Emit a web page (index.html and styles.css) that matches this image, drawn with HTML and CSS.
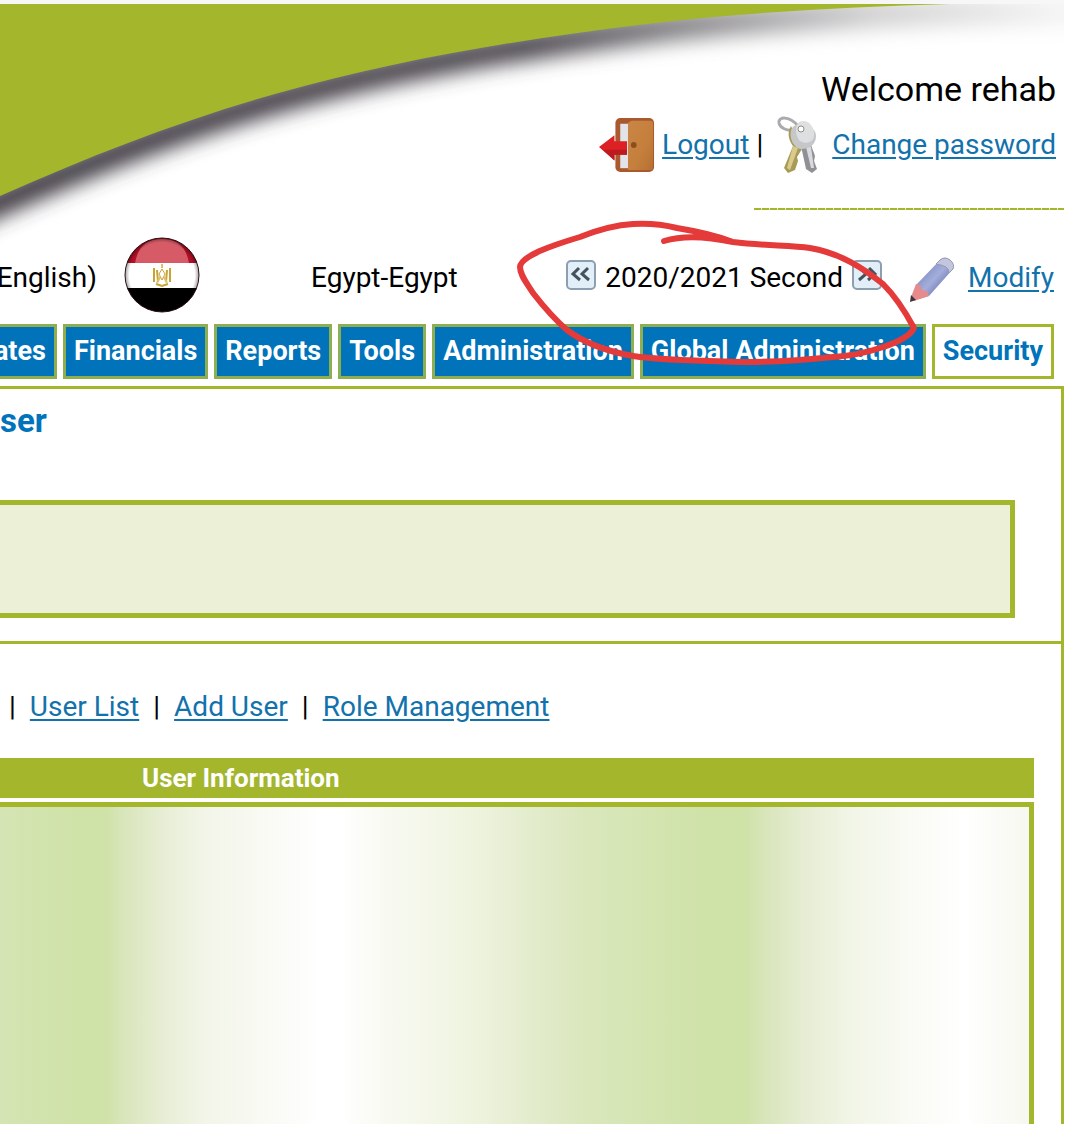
FILE: index.html
```html
<!doctype html>
<html lang="en">
    <head>
        <meta charset="utf-8">
        <title>Security</title>
        <meta name="viewport" content="width=device-width, initial-scale=1"/>
        <link rel="stylesheet" href="styles.css">
    </head>
    <body>
        <div class="page">
            <svg class="swoosh" viewBox="0 0 1064 250" preserveAspectRatio="none" aria-hidden="true">
                <defs>
                    <linearGradient id="fade" gradientUnits="userSpaceOnUse" x1="0" y1="0" x2="1064" y2="0">
                        <stop offset="0" stop-color="#3f3a42"/>
                        <stop offset=".5" stop-color="#4c484f"/>
                        <stop offset=".64" stop-color="#858387"/>
                        <stop offset=".82" stop-color="#d0d0d1"/>
                        <stop offset="1" stop-color="#f4f4f4"/>
                    </linearGradient>
                    <filter id="soft" filterUnits="userSpaceOnUse" x="-80" y="-40" width="1250" height="330">
                        <feGaussianBlur stdDeviation="10"/>
                    </filter>
                </defs>
                <path d="M1140 12H950C849 14 748 18 647 30C523 45 399 65 275 100C183 126 92 161 0 202L-60 230" fill="none" stroke="url(#fade)" stroke-width="28" filter="url(#soft)"/>
                <path d="M0 4H950C849 7 748 12 647 24C523 39 399 59 275 94C183 120 92 155 0 196Z" fill="#a3b62c"/>
                <path d="M0 0H1064V4H0Z" fill="#f7f7f7"/>
            </svg>

            <div class="account">
                <div class="welcome">Welcome rehab</div>
                <div class="account-links">
                    <svg class="icon-door" viewBox="0 0 58 58" aria-hidden="true">
                        <defs>
                            <linearGradient id="wood" x1="0" y1="0" x2="1" y2="1">
                                <stop offset="0" stop-color="#c98646"/>
                                <stop offset=".6" stop-color="#c57f3c"/>
                                <stop offset="1" stop-color="#b56f32"/>
                            </linearGradient>
                        </defs>
                        <rect x="17" y="1" width="40" height="56" rx="5" fill="#a9592d"/>
                        <path d="M22 7h9v46h-9z" fill="#e3e4ea"/>
                        <path d="M30 6l4-2h19q3 0 3 3v45q0 3-3 3H30z" fill="url(#wood)"/>
                        <circle cx="36" cy="29" r="3" fill="#8f4d1d"/>
                        <path d="M0 31L16 19v6h13v14H16v6z" fill="#dc2024"/>
                        <path d="M16 34h13v5H16v6L4 34z" fill="#bd1a20"/>
                    </svg>
                    <a href="#">Logout</a>
                    <span>|</span>
                    <svg class="icon-keys" viewBox="0 0 46 58" aria-hidden="true">
                        <path d="M23 10C15 0 3 0 4 7c1 5 8 8 14 7" fill="none" stroke="#a9abae" stroke-width="3"/>
                        <path d="M16 10C11 18 15 26 18 30L9 52l4 5 7-3 3-9-1-4 5-8z" fill="#a99a57"/>
                        <path d="M18 30l-6 22 3 2 8-22z" fill="#d8cb8b"/>
                        <path d="M26 30l5 23 6 4 5-4-3-8 1-5-4-11z" fill="#8f9195"/>
                        <path d="M31 31l5 21 3 0-3-21z" fill="#d9dadd"/>
                        <path d="M17 12c6-9 24-3 24 8 0 9-7 13-15 13-8-1-13-13-9-21z" fill="#c6c7c9"/>
                        <path d="M24 6c9-4 16 5 15 14-1 7-10 9-15 4-4-6-4-13 0-18z" fill="#dedfe0"/>
                        <circle cx="26" cy="13" r="3" fill="#fff" stroke="#8d8c85" stroke-width="1"/>
                    </svg>
                    <a href="#">Change password</a>
                </div>
                <div class="account-rule"></div>
            </div>

            <div class="settings">
                <div class="settings-left">
                    <span class="language">English)</span>
                    <svg class="icon-flag" viewBox="0 0 76 76" aria-hidden="true">
                        <defs>
                            <clipPath id="disc"><circle cx="38" cy="38" r="37"/></clipPath>
                            <radialGradient id="shade">
                                <stop offset=".86" stop-color="#000" stop-opacity="0"/>
                                <stop offset="1" stop-color="#000" stop-opacity=".45"/>
                            </radialGradient>
                        </defs>
                        <g clip-path="url(#disc)">
                            <path d="M0 0h76v26H0z" fill="#b30f25"/>
                            <path d="M11 26C14 10 22 2 38 2s24 8 27 24z" fill="#d75b66"/>
                            <path d="M0 26h76v25H0z" fill="#fff"/>
                            <circle cx="38" cy="38" r="38" fill="url(#shade)"/>
                            <path d="M0 51h76v25H0z" fill="#000"/>
                        </g>
                        <circle cx="38" cy="38" r="37" fill="none" stroke="#2b1014" stroke-width="1"/>
                        <g fill="none" stroke="#c9a233" stroke-width="2">
                            <path d="M30 31v14M33 33l1 12M46 31v14M43 33l-1 12M32 47l6 2 6-2"/>
                            <path d="M38 27v4M36 40l-3 6M40 40l3 6" stroke="#dcc170"/>
                            <path d="M38 32l-3 5 3 6 3-6z" stroke-width="1"/>
                        </g>
                    </svg>
                    <span>Egypt-Egypt</span>
                </div>
                <div class="settings-right">
                    <button class="step" type="button" aria-label="Previous term">
                        <svg viewBox="0 0 32 32" aria-hidden="true">
                            <rect x="2" y="2" width="28" height="28" rx="4" fill="#e2eff8" stroke="#8c9fb0" stroke-width="2"/>
                            <path d="M14 9l-6 6 7 6M23 9l-6 6 7 6" fill="none" stroke="#45525e" stroke-width="3"/>
                        </svg>
                    </button>
                    <span>2020/2021 Second</span>
                    <button class="step" type="button" aria-label="Next term">
                        <svg viewBox="0 0 32 32" aria-hidden="true">
                            <rect x="2" y="2" width="28" height="28" rx="4" fill="#e2eff8" stroke="#8c9fb0" stroke-width="2"/>
                            <path d="M9 9l6 6-7 6M18 9l6 6-7 6" fill="none" stroke="#45525e" stroke-width="3"/>
                        </svg>
                    </button>
                    <svg class="icon-pencil" viewBox="0 0 46 48" aria-hidden="true">
                        <defs>
                            <linearGradient id="lead" x1="0" y1="0" x2="1" y2="1">
                                <stop offset=".2" stop-color="#7f8bc2"/>
                                <stop offset=".5" stop-color="#a3aedb"/>
                                <stop offset=".8" stop-color="#626eab"/>
                            </linearGradient>
                        </defs>
                        <path d="M7 30L32 4q4-3 9 1 5 4 3 9L20 41l-10 3z" fill="url(#lead)"/>
                        <path d="M31 5q5-4 10 0 5 4 3 9l-4 4q1-7-13-9z" fill="#c3c6dc" stroke="#979bb2" stroke-width="1"/>
                        <path d="M7 29l4 1 2 5 5 1 2 5-15 5-3-4z" fill="#e58b8d"/>
                        <path d="M2 40l5 5-6 2z" fill="#38363c"/>
                    </svg>
                    <a href="#">Modify</a>
                </div>
            </div>

            <nav class="tabs">
                <a href="#">ates</a>
                <a href="#">Financials</a>
                <a href="#">Reports</a>
                <a href="#">Tools</a>
                <a href="#">Administration</a>
                <a href="#">Global Administration</a>
                <a class="active" href="#">Security</a>
            </nav>

            <main class="content">
                <div class="content-head">
                    <h1>ser</h1>
                    <div class="notice"></div>
                </div>
                <div class="sub-links">
                    <span>|</span>
                    <a href="#">User List</a>
                    <span>|</span>
                    <a href="#">Add User</a>
                    <span>|</span>
                    <a href="#">Role Management</a>
                </div>
                <h2>User Information</h2>
                <div class="user-info"></div>
            </main>

            <!-- hand-drawn mark round the term picker -->
            <svg class="marker" viewBox="0 0 410 150" aria-hidden="true">
                <path d="M149 23C165 18 185 17 218 24C250 28 275 27 295 30C325 35 348 50 368 66C380 78 391 95 399 110C393 124 350 137 318 139C290 142 260 144 232 144C200 143 150 143 118 138C90 133 68 124 52 112C38 100 25 84 18 75C11 64 5 57 5 49C6 38 35 28 65 19C85 11 100 7 118 6C135 5 150 7 162 10C180 13 200 17 218 24"/>
            </svg>
        </div>
    </body>
</html>
```
FILE: styles.css
```css
* {
    box-sizing: border-box;
}
body {
    margin: 0;
    background-color: #fff;
    color: #000;
    font-family: Roboto, "Liberation Sans", sans-serif;
    font-size: 28px;
    line-height: 32px;
}
a {
    color: #1272ac;
    text-underline-offset: 3px;
    white-space: nowrap;
}
.page {
    position: relative;
    display: flex;
    flex-direction: column;
    min-height: 100vh;
    padding-right: 16px;
    overflow: hidden;
}
.page svg {
    display: block;
    flex: none;
}

/* header */
.swoosh {
    position: absolute;
    top: 0;
    left: 0;
    z-index: -1;
    width: calc(100% - 16px);
    height: 250px;
}
.account {
    display: flex;
    flex-direction: column;
    align-items: flex-end;
    padding-top: 69px;
}
.welcome {
    padding-right: 8px;
    font-size: 34px;
    line-height: 40px;
}
.account-links {
    display: flex;
    align-items: center;
    gap: 7px;
    height: 72px;
    padding-right: 8px;
}
.icon-door {
    width: 56px;
    height: 58px;
}
.icon-keys {
    width: 46px;
    height: 58px;
    margin: 0 4px 0 5px;
}
.account-rule {
    width: 310px;
    height: 2px;
    margin-top: 27px;
    background: repeating-linear-gradient(to right, #a3b62c 0, #a3b62c 7px, #e3e9c0 7px, #e3e9c0 8px);
}
.settings {
    display: flex;
    justify-content: space-between;
    align-items: center;
    height: 114px;
    padding: 16px 10px 0 0;
}
.settings-left,
.settings-right {
    display: flex;
    align-items: center;
}
.settings span,
.settings a {
    padding-top: 6px;
    white-space: nowrap;
}
.settings .language {
    display: flex;
    justify-content: flex-end;
    width: 97px;
}
.icon-flag {
    width: 76px;
    height: 76px;
    margin: 0 111px 0 27px;
}
.settings-right {
    gap: 8px;
}
.step {
    width: 32px;
    height: 32px;
    padding: 0;
    border: 0;
    background: none;
}
.icon-pencil {
    width: 46px;
    height: 48px;
    margin: 8px 5px 0 18px;
}

/* tabs */
.tabs {
    display: flex;
    justify-content: flex-end;
    gap: 6px;
    padding-right: 10px;
}
.tabs a {
    padding: 8px;
    border: 3px solid #8fae50;
    background-color: #0073ba;
    color: #fff;
    font-size: 27px;
    font-weight: bold;
    line-height: 33px;
    text-decoration: none;
}
.tabs .active {
    border-color: #a3b62c;
    background-color: #fff;
    color: #0073ba;
}

/* content */
.content {
    display: flex;
    flex: 1;
    flex-direction: column;
    margin-top: 7px;
    border-top: 3px solid #a3b62c;
    border-right: 3px solid #a3b62c;
}
.content-head {
    padding: 12px 46px 23px 0;
    border-bottom: 3px solid #a3b62c;
}
.content h1 {
    margin: 0 0 59px;
    color: #0073ba;
    font-size: 33px;
    line-height: 40px;
}
.notice {
    height: 118px;
    border: 5px solid #a3b62c;
    border-left: 0;
    background-color: #ebf0d7;
}
.sub-links {
    display: flex;
    gap: 14px;
    padding: 47px 9px 35px;
}
.content h2 {
    margin: 0 27px 4px 0;
    padding-left: 142px;
    background-color: #a3b62c;
    color: #fff;
    font-size: 26px;
    line-height: 40px;
}
.user-info {
    flex: 1;
    min-height: 320px;
    margin-right: 27px;
    border: solid #a3b62c;
    border-width: 5px 5px 0 0;
    background: linear-gradient(to right, #d4e4b4 0, #cfe2a7 80px, #cfe2a7 105px, #d8e5ba 122px, #e8eed6 165px, #f2f5e8 205px, #fbfcf8 285px, #fff 320px, #fff 340px, #f8faf2 385px, #eff4e0 470px, #e1eac9 545px, #d9e7bb 590px, #cfe2a8 705px, #cfe2a8 745px, #d8e5ba 765px, #e6edd4 805px, #f1f5e6 850px, #fafbf6 915px, #fff 965px, #f6f8ef 1030px);
}

/* lies over the term picker and the tabs */
.page .marker {
    position: absolute;
    top: 218px;
    right: 155px;
    width: 410px;
    height: 150px;
    overflow: visible;
    fill: none;
    stroke: #e53a3a;
    stroke-width: 6px;
    stroke-linecap: round;
    stroke-linejoin: round;
    pointer-events: none;
}
```
